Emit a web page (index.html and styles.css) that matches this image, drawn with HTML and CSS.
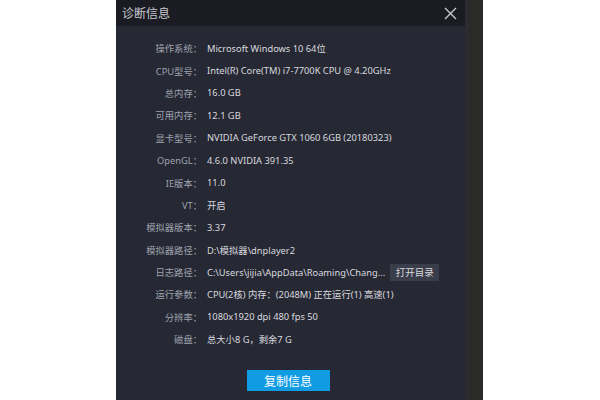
FILE: index.html
```html
<!DOCTYPE html>
<html lang="zh-CN">
<head>
<meta charset="utf-8">
<link rel="stylesheet" href="styles.css">
</head>
<body>
<div class="stage">
  <div class="dialog">
    <div class="titlebar">
      <span class="title">诊断信息</span>
      <svg class="close" width="13" height="13" viewBox="0 0 13 13"><path d="M1 1L12 12M12 1L1 12" stroke="#c9cad0" stroke-width="1.4" fill="none"/></svg>
    </div>
    <div class="body">
      <div class="info">
        <div class="label">操作系统：</div><div class="value">Microsoft Windows 10 64位</div>
        <div class="label">CPU型号：</div><div class="value">Intel(R) Core(TM) i7-7700K CPU @ 4.20GHz</div>
        <div class="label">总内存：</div><div class="value">16.0 GB</div>
        <div class="label">可用内存：</div><div class="value">12.1 GB</div>
        <div class="label">显卡型号：</div><div class="value">NVIDIA GeForce GTX 1060 6GB (20180323)</div>
        <div class="label">OpenGL：</div><div class="value">4.6.0 NVIDIA 391.35</div>
        <div class="label">IE版本：</div><div class="value">11.0</div>
        <div class="label">VT：</div><div class="value">开启</div>
        <div class="label">模拟器版本：</div><div class="value">3.37</div>
        <div class="label">模拟器路径：</div><div class="value">D:\模拟器\dnplayer2</div>
        <div class="label">日志路径：</div><div class="value path"><span class="pathtext">C:\Users\jijia\AppData\Roaming\Chang...</span><button class="open">打开目录</button></div>
        <div class="label">运行参数：</div><div class="value">CPU(2核) 内存：(2048M) 正在运行(1) 高速(1)</div>
        <div class="label">分辨率：</div><div class="value">1080x1920 dpi 480 fps 50</div>
        <div class="label">磁盘：</div><div class="value">总大小8 G，剩余7 G</div>
      </div>
      <div class="actions"><button class="copy">复制信息</button></div>
    </div>
  </div>
  <div class="edge"></div>
</div>
</body>
</html>
```
FILE: styles.css
```css
html, body {
  margin: 0;
  padding: 0;
  background: #ffffff;
  width: 600px;
  height: 400px;
  overflow: hidden;
  font-family: "Noto Sans", "Noto Sans CJK SC", sans-serif;
}
.stage {
  display: flex;
  height: 400px;
  padding-left: 116px;
}
.dialog {
  width: 349px;
  height: 400px;
  display: flex;
  flex-direction: column;
  background: #262834;
}
.edge {
  width: 18px;
  height: 400px;
  background: #2a2a28;
  border-left: 4px solid #2c2b31;
  box-sizing: border-box;
}
.titlebar {
  height: 26px;
  background: #1b1c23;
  display: flex;
  align-items: center;
  justify-content: space-between;
  padding: 0 8px 0 6px;
  flex: none;
}
.title {
  color: #c8c9cf;
  font-size: 12px;
}
.close { display: block; }
.body {
  flex: 1;
  padding-top: 11px;
  display: flex;
  flex-direction: column;
}
.info {
  display: grid;
  grid-template-columns: 86px 1fr;
  column-gap: 5px;
  grid-auto-rows: 22.4px;
  align-items: center;
  font-size: 9.3px;
}
.label {
  text-align: right;
  color: #9fa3ae;
  white-space: nowrap;
}
.value {
  color: #d9dadf;
  white-space: nowrap;
}
.path {
  display: flex;
  align-items: center;
  gap: 5px;
}
.open {
  font-family: inherit;
  font-size: 9.5px;
  color: #d9dadf;
  background: #3a3d4a;
  border: none;
  height: 17px;
  width: 49px;
  padding: 0;
}
.actions {
  display: flex;
  justify-content: center;
  margin-top: 20px;
  padding-right: 5px;
}
.copy {
  font-family: inherit;
  font-size: 12px;
  color: #ffffff;
  background: #109be3;
  border: none;
  width: 83px;
  height: 21px;
  padding: 0;
}
```
